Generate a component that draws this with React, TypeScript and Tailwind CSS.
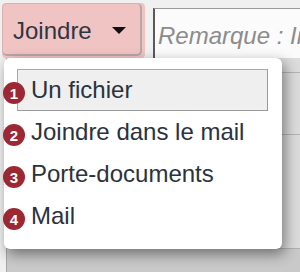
import React from "react";

const items = ["Un fichier", "Joindre dans le mail", "Porte-documents", "Mail"];

export default function App() {
  return (
    <div className="relative w-[300px] h-[272px] overflow-hidden bg-[#f0f0f0] font-['Liberation_Sans',Arial,sans-serif]">
      {/* top bar */}
      <div className="flex h-[58px] items-start">
        <div className="ml-[2px] mt-[3px] w-[143px] h-[55px] bg-[#f1c4c4] rounded-[4px] pr-[3px] pb-[2px]">
          <div className="h-full flex items-center rounded-[5px] border border-[#dcb0b0] border-r-2 border-b-2 border-r-[#b9a6a6] border-b-[#b9a6a6] pl-[10px]">
            <span className="text-[24px] leading-none text-[#2d3642] pt-[3px]">Joindre</span>
            <svg className="ml-[20px] mt-[3px]" width="14" height="8" viewBox="0 0 14 8">
              <polygon points="0,0 14,0 7,7" fill="#111" />
            </svg>
          </div>
        </div>
        <div className="ml-[8px] mt-[8px] flex-1 h-[50px] bg-[#fbfbfb] border-t border-t-[#9a9a9a] border-l-2 border-l-[#5a5a5a] flex items-center pl-[3px] overflow-hidden">
          <span className="text-[24px] italic text-[#8c8c8c] whitespace-nowrap pt-[4px]">Remarque : Indiquez</span>
        </div>
      </div>

      {/* content behind */}
      <div className="h-[214px] ml-[6px] border-l border-[#a8a8a8] bg-[#dcdcdc] flex flex-col">
        <div className="h-[15px] border-b border-[#b4b4b4]" />
        <div className="h-[62px] border-b border-[#b4b4b4]" />
        <div className="h-[114px] border-b border-[#b0b0b0]" />
        <div className="flex-1 bg-[#c9c9c9]" />
      </div>

      {/* dropdown menu */}
      <div className="absolute left-[4px] top-[58px] w-[278px] h-[191px] bg-white rounded-[6px] shadow-[3px_5px_14px_rgba(0,0,0,0.45)] pt-[11px]">
        {items.map((label, i) => (
          <div
            key={label}
            className={
              i === 0
                ? "relative h-[42px] ml-[13px] mr-[14px] flex items-center pl-[13px] border border-[#a9a9a9] border-r-[#9a9a9a] border-b-[#9a9a9a] bg-[#efefef]"
                : "relative h-[42px] ml-[13px] mr-[14px] flex items-center pl-[13px] border border-transparent"
            }
          >
            <span className="absolute left-[-15px] top-[12px] w-[22px] h-[22px] rounded-full bg-[#9c2833] text-white text-[15px] font-bold flex items-center justify-center leading-none">
              {i + 1}
            </span>
            <span className="text-[24px] leading-none text-[#2b323c] whitespace-nowrap">{label}</span>
          </div>
        ))}
      </div>
    </div>
  );
}
